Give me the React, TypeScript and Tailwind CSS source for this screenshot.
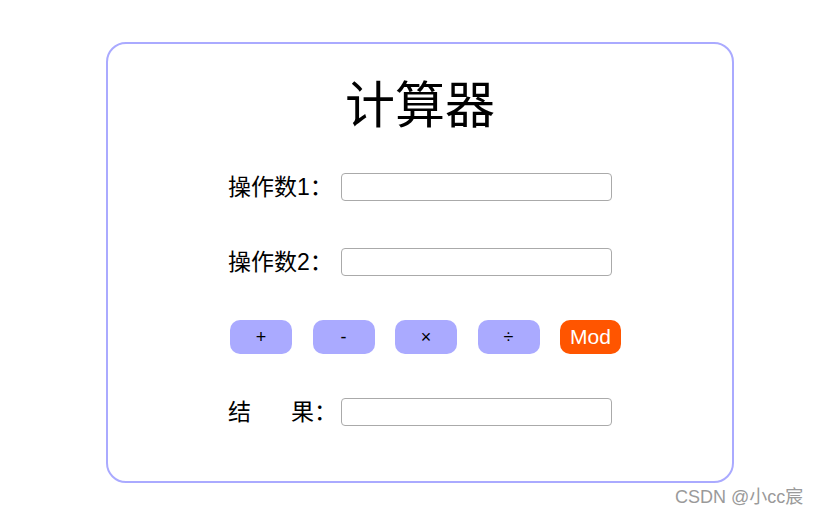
const font = "font-['Liberation_Sans','Noto_Sans_CJK_SC',sans-serif]";

const Field = ({ label }: { label: React.ReactNode }) => (
    <div className="flex items-center justify-center h-[28px]">
        <div className="w-[113px] text-[23px] leading-none text-black whitespace-nowrap">{label}</div>
        <input className="w-[271px] h-[28px] border border-[#aaaaaa] rounded-[4px] outline-none" />
    </div>
);

export default function App() {
    const ops = ['+', '-', '×', '÷'];

    return (
        <div className={`relative w-[821px] h-[514px] bg-white ${font}`}>
            <div className="pt-[42px] pl-[106px]">
                <div className="w-[628px] h-[441px] border-2 border-[#aaaaff] rounded-[20px] pt-[37px]">
                    <h1 className="text-center text-[50px] leading-[50px] text-black">计算器</h1>

                    <div className="mt-[42px]">
                        <Field label="操作数1：" />
                    </div>
                    <div className="mt-[47px]">
                        <Field label="操作数2：" />
                    </div>

                    <div className="mt-[44px] flex justify-center gap-[20.5px] pl-[11px]">
                        {ops.map((op) => (
                            <button
                                key={op}
                                className="w-[62px] h-[34px] rounded-[10px] bg-[#aaaaff] text-[18px] text-black"
                            >
                                {op}
                            </button>
                        ))}
                        <button className="w-[61px] h-[34px] rounded-[10px] bg-[#ff5500] text-[21px] text-white">
                            Mod
                        </button>
                    </div>

                    <div className="mt-[44px]">
                        <Field
                            label={
                                <span>
                                    结<span className="ml-[40px]">果：</span>
                                </span>
                            }
                        />
                    </div>
                </div>
            </div>

            <div className="absolute left-[675px] top-[484px] text-[18px] text-[#9a9a9a]">CSDN @小cc宸</div>
        </div>
    );
}
